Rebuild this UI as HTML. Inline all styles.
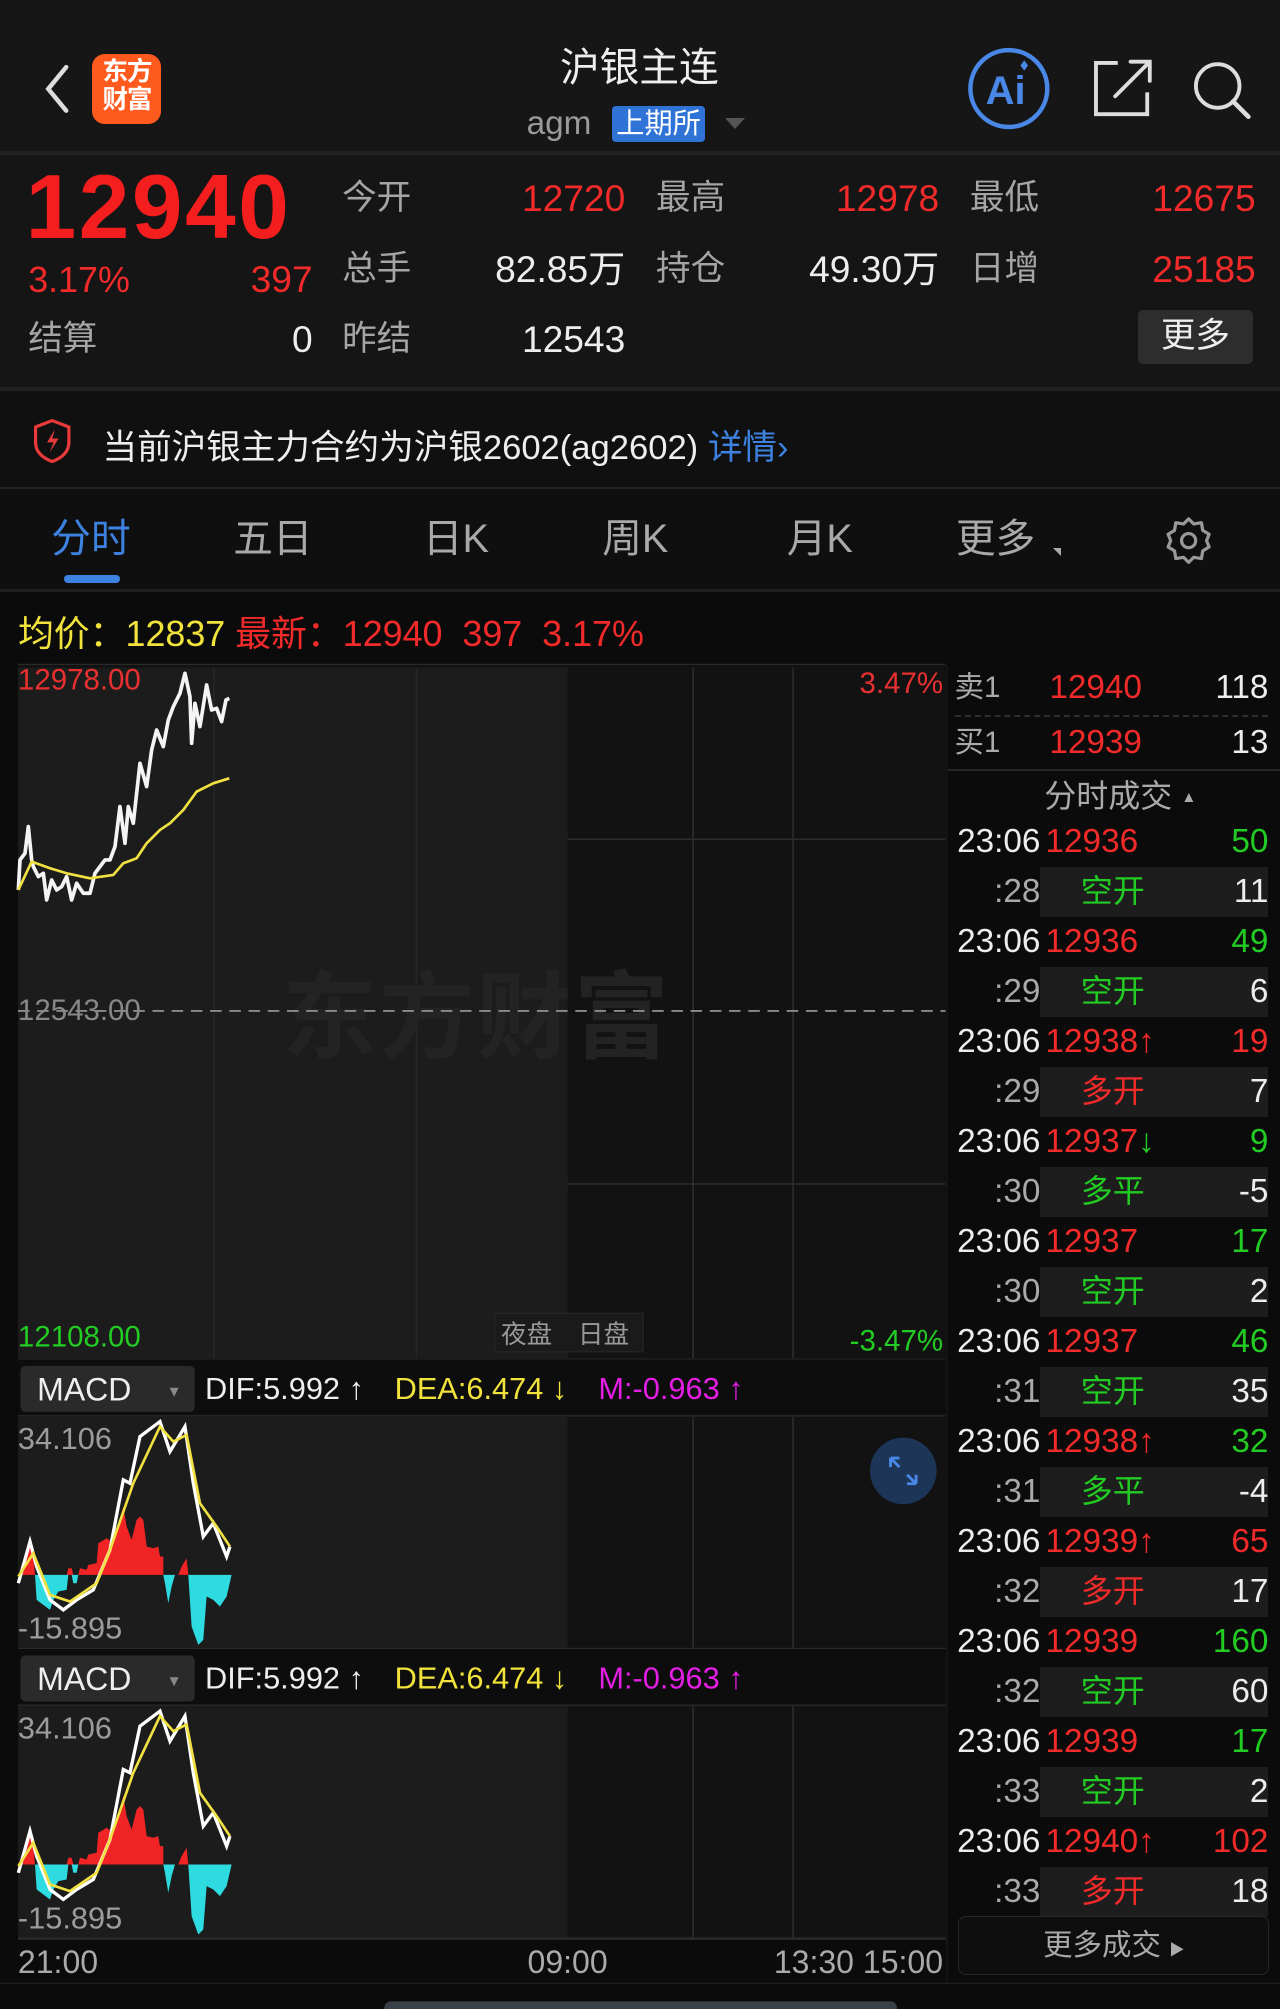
<!DOCTYPE html>
<html><head><meta charset="utf-8"><style>
html,body{margin:0;padding:0;background:#0b0b0b;}
body{width:1280px;height:2009px;overflow:hidden;}
#w{zoom:1.28128;width:999px;height:1568px;position:relative;font-family:"Liberation Sans","Noto Sans CJK SC",sans-serif;color:#e8e8e8;}
.a{position:absolute;white-space:nowrap;}
.r{color:#f22a2a}.g{color:#22cc22}.y{color:#f1e23c}.m{color:#e51ee5}.gr{color:#a9a9a9}.w{color:#ededed}
.lbl{font-size:27px;color:#a5a5a5;line-height:30px}
.num{font-size:29px;line-height:30px;text-align:right}
.tr{position:absolute;left:740px;width:259px;height:39px;font-size:26px;line-height:39px}
.tr .t{position:absolute;right:187px}
.tr .p{position:absolute;left:76px}
.tr .q{position:absolute;right:9px}
.tr .bg{position:absolute;left:72px;width:178px;height:39px;background:#1d1d1d}
.tr .k{position:absolute;left:72px;width:113px;text-align:center;font-size:25px}
.tab{position:absolute;top:402px;font-size:31px;line-height:38px;color:#a9a9a9}
</style></head><body><div id="w">
<div class="a" style="left:0;top:0;width:999px;height:118px;background:#161616"></div>
<svg class="a" style="left:30px;top:48px" width="30" height="44"><path d="M22 4 L8 21 L22 38" stroke="#ddd" stroke-width="3.5" fill="none" stroke-linecap="round"/></svg>
<div class="a" style="left:72px;top:42px;width:54px;height:52px;background:#ff5a1e;border-radius:10px;color:#fff;font-size:20px;line-height:22px;font-weight:bold;text-align:center;padding-top:3px;letter-spacing:-1px">东方<br>财富</div>
<div class="a" style="left:399px;width:200px;top:28px;text-align:center;font-size:31px;color:#eee">沪银主连</div>
<div class="a" style="left:411px;top:82px;font-size:26px;color:#9a9a9a">agm</div>
<div class="a" style="left:478px;top:83px;width:72px;height:28px;background:#2f73d6;border-radius:3px;color:#fff;font-size:22px;line-height:28px;text-align:center">上期所</div>
<div class="a" style="left:566px;top:92px;width:0;height:0;border-left:8px solid transparent;border-right:8px solid transparent;border-top:9px solid #555"></div>
<svg class="a" style="left:752px;top:35px" width="230" height="70">
<circle cx="35" cy="34" r="30" fill="none" stroke="#4a88e8" stroke-width="3.5"/>
<text x="17" y="46" font-family="Liberation Sans" font-weight="bold" font-size="31" fill="#4a88e8">Ai</text>
<path d="M47 12 l3 4 l-3 4 l-3 -4z" fill="#4a88e8"/>
<path d="M120 14 H103 V54 H143 V37" stroke="#ddd" stroke-width="3" fill="none"/>
<path d="M118 40 L143 15 M130 13 H145 V28" stroke="#ddd" stroke-width="3" fill="none" stroke-linecap="round"/>
<circle cx="198" cy="32" r="17" stroke="#ddd" stroke-width="3" fill="none"/>
<path d="M210 44 L222 56" stroke="#ddd" stroke-width="3.5" stroke-linecap="round"/>
</svg>
<div class="a" style="left:0;top:118px;width:999px;height:3px;background:#222"></div>
<div class="a" style="left:0;top:121px;width:999px;height:181px;background:#151515"></div>
<div class="a" style="left:20px;top:122px;font-size:71px;font-weight:bold;color:#f51e1e;letter-spacing:2px">12940</div>
<div class="a r" style="left:22px;top:203px;font-size:28px">3.17%</div>
<div class="a r num" style="left:150px;width:94px;top:203px">397</div>
<div class="a lbl" style="left:22px;top:250px">结算</div>
<div class="a num w" style="left:150px;width:94px;top:250px">0</div>
<div class="a lbl" style="left:267px;top:140px">今开</div><div class="a num r" style="left:380px;width:108px;top:140px">12720</div>
<div class="a lbl" style="left:512px;top:140px">最高</div><div class="a num r" style="left:625px;width:108px;top:140px">12978</div>
<div class="a lbl" style="left:757px;top:140px">最低</div><div class="a num r" style="left:870px;width:110px;top:140px">12675</div>
<div class="a lbl" style="left:267px;top:195px">总手</div><div class="a num w" style="left:360px;width:128px;top:195px">82.85万</div>
<div class="a lbl" style="left:512px;top:195px">持仓</div><div class="a num w" style="left:600px;width:133px;top:195px">49.30万</div>
<div class="a lbl" style="left:757px;top:195px">日增</div><div class="a num r" style="left:870px;width:110px;top:195px">25185</div>
<div class="a lbl" style="left:267px;top:250px">昨结</div><div class="a num w" style="left:380px;width:108px;top:250px">12543</div>
<div class="a" style="left:888px;top:242px;width:90px;height:42px;background:#2d2d2d;border-radius:4px;font-size:27px;line-height:42px;text-align:center;color:#eee">更多</div>
<div class="a" style="left:0;top:302px;width:999px;height:3px;background:#222"></div>
<div class="a" style="left:0;top:305px;width:999px;height:75px;background:#101010"></div>
<svg class="a" style="left:26px;top:326px" width="32" height="36"><path d="M15 2 L28 7 V19 Q28 29 15 34 Q2 29 2 19 V7 Z" fill="none" stroke="#e83a3a" stroke-width="2.5"/><path d="M17 9 L11 19 H16 L13 27 L20 16 H15 Z" fill="#e83a3a"/></svg>
<div class="a" style="left:80px;top:327px;font-size:27px;color:#eee">当前沪银主力合约为沪银2602(ag2602) <span style="color:#3d82e0">详情›</span></div>
<div class="a" style="left:0;top:380px;width:999px;height:2px;background:#222"></div>
<div class="a" style="left:0;top:382px;width:999px;height:78px;background:#0f0f0f"></div>
<div class="tab" style="left:40px;color:#3d82e0">分时</div>
<div class="a" style="left:50px;top:449px;width:44px;height:6px;border-radius:3px;background:#3d82e0"></div>
<div class="tab" style="left:182px">五日</div>
<div class="tab" style="left:330px">日K</div>
<div class="tab" style="left:470px">周K</div>
<div class="tab" style="left:614px">月K</div>
<div class="tab" style="left:746px">更多</div>
<div class="a" style="left:822px;top:428px;width:0;height:0;border-left:7px solid transparent;border-top:7px solid #aaa"></div>
<svg class="a" style="left:908px;top:402px" width="40" height="40"><path d="M20 3 L24 7 L30 6 L31 12 L36 15 L34 20 L36 25 L31 28 L30 34 L24 33 L20 37 L16 33 L10 34 L9 28 L4 25 L6 20 L4 15 L9 12 L10 6 L16 7 Z" fill="none" stroke="#999" stroke-width="2.5" stroke-linejoin="round"/><circle cx="20" cy="20" r="5.5" fill="none" stroke="#999" stroke-width="2.5"/></svg>
<div class="a" style="left:0;top:460px;width:999px;height:2px;background:#1e1e1e"></div>
<div class="a" style="left:14px;top:472px;font-size:28px"><span class="y">均价：12837</span>&nbsp;<span class="r">最新：12940&nbsp; 397&nbsp; 3.17%</span></div>
<svg class="a" style="left:0;top:0" width="999" height="1568">
<rect x="14" y="519" width="724" height="542" fill="#121212"/>
<rect x="14" y="521" width="429" height="539" fill="#1c1c1c"/>
<line x1="14" y1="518.5" x2="738" y2="518.5" stroke="#2a2a2a"/>
<g stroke="#262626" stroke-width="1.3">
<line x1="167" y1="521" x2="167" y2="1060"/><line x1="325" y1="521" x2="325" y2="1060"/>
</g>
<g stroke="#2c2c2c" stroke-width="1.3">
<line x1="541" y1="521" x2="541" y2="1060"/><line x1="619" y1="521" x2="619" y2="1060"/>
<line x1="443" y1="655" x2="738" y2="655"/><line x1="443" y1="924" x2="738" y2="924"/>
<line x1="14" y1="1061" x2="738" y2="1061"/>
</g>
<text x="220" y="820" font-size="74" font-weight="bold" fill="#232323" font-family="Noto Sans CJK SC" letter-spacing="2">东方财富</text>
<line x1="14" y1="789" x2="738" y2="789" stroke="#8a8a8a" stroke-width="1.5" stroke-dasharray="9,6"/>
<g transform="translate(0,515.1) scale(0.2601)" fill="none" stroke-linejoin="round">
<path d="M55 690 L60 600 L75 580 L85 500 L95 600 L100 620 L115 650 L130 640 L140 720 L155 660 L170 690 L185 680 L200 650 L215 720 L230 670 L250 700 L270 700 L285 640 L300 620 L315 600 L330 600 L345 560 L360 440 L375 550 L385 440 L400 490 L420 310 L440 380 L455 270 L470 210 L490 260 L505 180 L520 140 L540 100 L555 40 L570 110 L575 250 L585 130 L600 200 L620 75 L635 150 L650 145 L665 185 L678 120 L688 115" stroke="#f4f4f4" stroke-width="11"/>
<path d="M55 690 L95 605 L150 625 L200 640 L270 655 L340 645 L370 610 L410 595 L440 550 L480 510 L510 490 L550 450 L590 395 L640 370 L688 355" stroke="#f0e042" stroke-width="8"/>
</g>
<text x="14" y="538" font-size="23" fill="#e83030">12978.00</text>
<text x="14" y="796" font-size="23" fill="#888">12543.00</text>
<text x="14" y="1051" font-size="23" fill="#22cc22">12108.00</text>
<text x="736" y="541" font-size="23" fill="#e83030" text-anchor="end">3.47%</text>
<text x="736" y="1054" font-size="23" fill="#22cc22" text-anchor="end">-3.47%</text>
<rect x="386" y="1025" width="116" height="30" fill="#1a1a1a" stroke="#262626"/>
<text x="391" y="1048" font-size="20" fill="#999" font-family="Noto Sans CJK SC">夜盘</text>
<text x="451" y="1048" font-size="20" fill="#999" font-family="Noto Sans CJK SC">日盘</text>
<g id="mp">
<rect x="14" y="1061" width="724" height="44" fill="#0d0d0d"/>
<rect x="16" y="1066" width="136" height="36" rx="4" fill="#2a2a2a"/>
<text x="29" y="1093" font-size="25" fill="#eee">MACD</text>
<text x="130" y="1090" font-size="12" fill="#888">▼</text>
<text x="160" y="1092" font-size="24" fill="#eee">DIF:5.992 ↑</text>
<text x="308" y="1092" font-size="24" fill="#f1e23c">DEA:6.474 ↓</text>
<text x="467" y="1092" font-size="24" fill="#e51ee5">M:-0.963 ↑</text>
<line x1="14" y1="1105" x2="738" y2="1105" stroke="#262626" stroke-width="1.5"/>
<rect x="14" y="1106" width="724" height="180" fill="#121212"/>
<rect x="14" y="1106" width="429" height="180" fill="#1c1c1c"/>
<g stroke="#2c2c2c" stroke-width="1.3"><line x1="541" y1="1106" x2="541" y2="1286"/><line x1="619" y1="1106" x2="619" y2="1286"/></g>
<line x1="14" y1="1287" x2="738" y2="1287" stroke="#2a2a2a" stroke-width="2"/>
<g transform="translate(0,1100.4) scale(0.2601)">
<path d="M55 495 L75 470 L90 385 L100 440 L105 495 Z M200 495 L205 475 L215 475 L220 495 Z M235 495 L240 475 L260 480 L265 465 L290 460 L295 400 L320 385 L340 400 L350 360 L370 290 L380 350 L395 390 L410 330 L420 320 L430 330 L440 410 L460 415 L475 410 L480 440 L490 440 L490 495 Z M535 495 L545 470 L560 445 L565 495 Z" fill="#f02424"/>
<path d="M105 495 L110 570 L130 585 L150 600 L160 570 L175 545 L200 540 L205 495 Z M215 495 L220 520 L230 520 L235 495 Z M490 495 L495 520 L505 580 L515 530 L525 495 Z M565 495 L575 650 L595 705 L610 690 L620 560 L640 570 L660 590 L680 560 L695 495 Z" fill="#2ddbe0"/>
<path d="M55 520 L90 395 L110 470 L150 570 L190 600 L230 570 L280 540 L330 420 L370 210 L390 220 L420 80 L480 35 L510 125 L555 50 L580 220 L610 380 L640 340 L680 440 L690 410" fill="none" stroke="#fff" stroke-width="10"/>
<path d="M55 500 L100 430 L150 555 L210 575 L290 520 L330 420 L400 220 L480 50 L520 95 L560 75 L600 280 L650 350 L690 410" fill="none" stroke="#f0e042" stroke-width="8"/>
</g>
<text x="14" y="1131" font-size="24" fill="#9c9c9c">34.106</text>
<text x="14" y="1279" font-size="24" fill="#9c9c9c">-15.895</text>
</g>
<use href="#mp" transform="translate(0,226)"/>
<circle cx="705" cy="1148" r="26" fill="#1d3556"/>
<path d="M695 1138 L702 1145 M695 1138 V1145 M695 1138 H702 M715 1158 L708 1151 M715 1158 V1151 M715 1158 H708" stroke="#4a88e8" stroke-width="2.2" fill="none"/>
<text x="14" y="1540" font-size="25" fill="#aaa">21:00</text>
<text x="443" y="1540" font-size="25" fill="#aaa" text-anchor="middle">09:00</text>
<text x="736" y="1540" font-size="25" fill="#aaa" text-anchor="end">13:30 15:00</text>
<line x1="0" y1="1548" x2="999" y2="1548" stroke="#1e1e1e"/>
<line x1="739" y1="519" x2="739" y2="1548" stroke="#1a1a1a"/>
<rect x="300" y="1562" width="400" height="10" rx="5" fill="#3a4048"/>
</svg>
<div class="a" style="left:745px;top:522px;font-size:23px;line-height:30px;color:#aaa">卖1</div>
<div class="a r" style="left:819px;top:522px;font-size:26px;line-height:30px">12940</div>
<div class="a w" style="left:900px;width:90px;text-align:right;top:522px;font-size:26px;line-height:30px">118</div>
<div class="a" style="left:745px;top:558px;width:245px;border-top:2px dashed #2e2e2e"></div>
<div class="a" style="left:745px;top:565px;font-size:23px;line-height:30px;color:#aaa">买1</div>
<div class="a r" style="left:819px;top:565px;font-size:26px;line-height:30px">12939</div>
<div class="a w" style="left:900px;width:90px;text-align:right;top:565px;font-size:26px;line-height:30px">13</div>
<div class="a" style="left:740px;top:600px;width:259px;height:2px;background:#262626"></div>
<div class="a" style="left:815px;top:606px;font-size:25px;line-height:32px;color:#aaa">分时成交 <span style="font-size:12px;vertical-align:4px">▲</span></div>

<div class="tr" style="top:638px"><span class="t w">23:06</span><span class="p r">12936</span><span class="q g">50</span></div>
<div class="tr" style="top:677px"><div class="bg"></div><span class="t gr">:28</span><span class="k g">空开</span><span class="q w">11</span></div>
<div class="tr" style="top:716px"><span class="t w">23:06</span><span class="p r">12936</span><span class="q g">49</span></div>
<div class="tr" style="top:755px"><div class="bg"></div><span class="t gr">:29</span><span class="k g">空开</span><span class="q w">6</span></div>
<div class="tr" style="top:794px"><span class="t w">23:06</span><span class="p r">12938↑</span><span class="q r">19</span></div>
<div class="tr" style="top:833px"><div class="bg"></div><span class="t gr">:29</span><span class="k r">多开</span><span class="q w">7</span></div>
<div class="tr" style="top:872px"><span class="t w">23:06</span><span class="p r">12937<span class="g">↓</span></span><span class="q g">9</span></div>
<div class="tr" style="top:911px"><div class="bg"></div><span class="t gr">:30</span><span class="k g">多平</span><span class="q w">-5</span></div>
<div class="tr" style="top:950px"><span class="t w">23:06</span><span class="p r">12937</span><span class="q g">17</span></div>
<div class="tr" style="top:989px"><div class="bg"></div><span class="t gr">:30</span><span class="k g">空开</span><span class="q w">2</span></div>
<div class="tr" style="top:1028px"><span class="t w">23:06</span><span class="p r">12937</span><span class="q g">46</span></div>
<div class="tr" style="top:1067px"><div class="bg"></div><span class="t gr">:31</span><span class="k g">空开</span><span class="q w">35</span></div>
<div class="tr" style="top:1106px"><span class="t w">23:06</span><span class="p r">12938↑</span><span class="q g">32</span></div>
<div class="tr" style="top:1145px"><div class="bg"></div><span class="t gr">:31</span><span class="k g">多平</span><span class="q w">-4</span></div>
<div class="tr" style="top:1184px"><span class="t w">23:06</span><span class="p r">12939↑</span><span class="q r">65</span></div>
<div class="tr" style="top:1223px"><div class="bg"></div><span class="t gr">:32</span><span class="k r">多开</span><span class="q w">17</span></div>
<div class="tr" style="top:1262px"><span class="t w">23:06</span><span class="p r">12939</span><span class="q g">160</span></div>
<div class="tr" style="top:1301px"><div class="bg"></div><span class="t gr">:32</span><span class="k g">空开</span><span class="q w">60</span></div>
<div class="tr" style="top:1340px"><span class="t w">23:06</span><span class="p r">12939</span><span class="q g">17</span></div>
<div class="tr" style="top:1379px"><div class="bg"></div><span class="t gr">:33</span><span class="k g">空开</span><span class="q w">2</span></div>
<div class="tr" style="top:1418px"><span class="t w">23:06</span><span class="p r">12940↑</span><span class="q r">102</span></div>
<div class="tr" style="top:1457px"><div class="bg"></div><span class="t gr">:33</span><span class="k r">多开</span><span class="q w">18</span></div>
<div class="a" style="left:748px;top:1495px;width:241px;height:45px;border:1px solid #262626;border-radius:6px;background:#0e0e0e;text-align:center;font-size:23px;line-height:45px;color:#aaa">更多成交 <span style="font-size:12px">▶</span></div>
</div></body></html>
